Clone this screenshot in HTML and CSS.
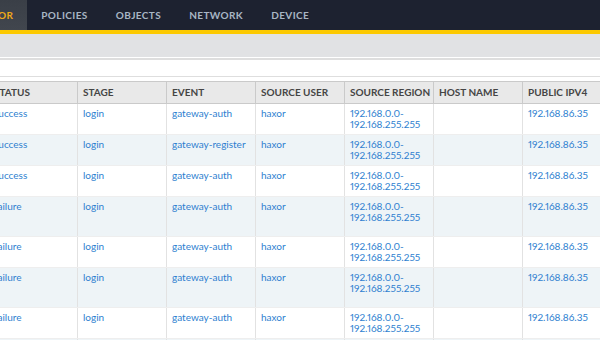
FILE: index.html
```html
<!DOCTYPE html>
<html lang="en">

<head>
    <meta charset="UTF-8">
    <title>Monitor - Logs</title>
    <link rel="stylesheet" href="styles.css">
</head>

<body>
    <div class="topnav">
        <a class="tab active" href="#">MONITOR</a>
        <a class="tab" href="#">POLICIES</a>
        <a class="tab" href="#">OBJECTS</a>
        <a class="tab" href="#">NETWORK</a>
        <a class="tab" href="#">DEVICE</a>
    </div>
    <div class="subbar"></div>
    <div class="filter-bar"></div>

    <div class="log-wrap">
        <table class="log-table">
            <thead>
                <tr>
                    <th>STATUS</th>
                    <th>STAGE</th>
                    <th>EVENT</th>
                    <th>SOURCE USER</th>
                    <th>SOURCE REGION</th>
                    <th>HOST NAME</th>
                    <th>PUBLIC IPV4</th>
                </tr>
            </thead>
            <tbody>
                <tr>
                    <td>success</td><td>login</td><td>gateway-auth</td><td>haxor</td>
                    <td>192.168.0.0-192.168.255.255</td><td></td><td>192.168.86.35</td>
                </tr>
                <tr>
                    <td>success</td><td>login</td><td>gateway-register</td><td>haxor</td>
                    <td>192.168.0.0-192.168.255.255</td><td></td><td>192.168.86.35</td>
                </tr>
                <tr>
                    <td>success</td><td>login</td><td>gateway-auth</td><td>haxor</td>
                    <td>192.168.0.0-192.168.255.255</td><td></td><td>192.168.86.35</td>
                </tr>
                <tr class="tall">
                    <td>failure</td><td>login</td><td>gateway-auth</td><td>haxor</td>
                    <td>192.168.0.0-192.168.255.255</td><td></td><td>192.168.86.35</td>
                </tr>
                <tr>
                    <td>failure</td><td>login</td><td>gateway-auth</td><td>haxor</td>
                    <td>192.168.0.0-192.168.255.255</td><td></td><td>192.168.86.35</td>
                </tr>
                <tr class="tall">
                    <td>failure</td><td>login</td><td>gateway-auth</td><td>haxor</td>
                    <td>192.168.0.0-192.168.255.255</td><td></td><td>192.168.86.35</td>
                </tr>
                <tr>
                    <td>failure</td><td>login</td><td>gateway-auth</td><td>haxor</td>
                    <td>192.168.0.0-192.168.255.255</td><td></td><td>192.168.86.35</td>
                </tr>
                <tr>
                    <td>failure</td><td>login</td><td>gateway-auth</td><td>haxor</td>
                    <td>192.168.0.0-192.168.255.255</td><td></td><td>192.168.86.35</td>
                </tr>
            </tbody>
        </table>
    </div>
</body>

</html>
```
FILE: styles.css
```css
body {
    margin: 0;
    font-family: 'Lato', 'Liberation Sans', sans-serif;
    background: white;
    overflow: hidden;
}

/* Top navigation */
.topnav {
    display: flex;
    height: 30px;
    background-color: #1d2230;
    border-bottom: 4px solid #fcc900;
    margin-left: -52px;
}

.tab {
    display: flex;
    align-items: center;
    padding: 0 14px;
    font-size: 10px;
    font-weight: bold;
    letter-spacing: 0.4px;
    color: #a8b6c4;
    text-decoration: none;
}

.tab.active {
    background: linear-gradient(to bottom, #3a3f47, #41464e);
    color: #f0a818;
}

.subbar {
    height: 23px;
    background-color: #e1e2e4;
    border-bottom: 1px solid white;
}

.filter-bar {
    height: 16px;
    border-top: 2px solid #dedede;
    border-bottom: 1px solid #dedede;
}

/* Log table */
.log-wrap {
    padding-top: 4px;
    margin-left: -12px;
}

.log-table {
    border-collapse: collapse;
    table-layout: fixed;
    width: 623px;
}

.log-table th,
.log-table td {
    box-sizing: border-box;
    width: 89px;
    text-align: left;
    vertical-align: top;
    padding: 4px 5px;
}

.log-table th {
    height: 22px;
    background-color: #e9e9e9;
    border: 1px solid #cacaca;
    font-size: 10px;
    color: #454545;
    line-height: 13px;
    white-space: nowrap;
    overflow: hidden;
}

.log-table td {
    height: 29px;
    font-size: 10px;
    line-height: 11px;
    font-variant-numeric: proportional-nums;
    color: #2e7fd0;
    border-left: 1px solid #e2e2e2;
    border-right: 1px solid #e2e2e2;
    border-bottom: 1px solid #eeeeee;
}

.log-table tbody tr:nth-child(even) td {
    background-color: #eef4f7;
}

.log-table tr.tall td {
    height: 40px;
}
```
